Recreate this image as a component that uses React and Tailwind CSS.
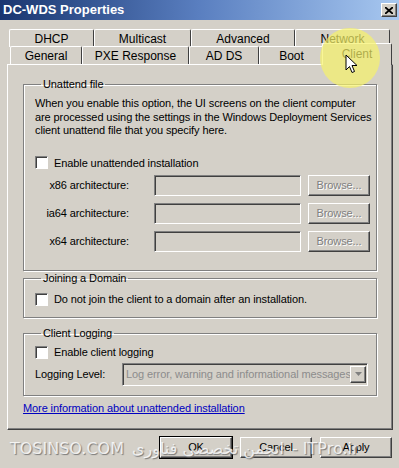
import React from "react";

const raised =
  "border border-t-white border-l-white border-r-[#404040] border-b-[#404040] shadow-[inset_-1px_-1px_0_#808080]";
const sunken =
  "border border-t-[#808080] border-l-[#808080] border-r-white border-b-white shadow-[inset_1px_1px_0_#404040]";
const etched = "border border-[#808080] shadow-[inset_1px_1px_0_#fff,1px_1px_0_#fff]";
const txt = "text-[11px] tracking-[-0.1px] whitespace-nowrap";

const BACK_TABS = [
  ["DHCP", 85],
  ["Multicast", 97],
  ["Advanced", 104],
  ["Network", 95],
];
const FRONT_TABS = [
  ["General", 72],
  ["PXE Response", 107],
  ["AD DS", 70],
  ["Boot", 65],
];

function Tab({ label, w, className = "" }) {
  return (
    <div
      style={{ width: w }}
      className={`flex h-[18px] shrink-0 items-center justify-center rounded-t-[2px] border-t border-l border-r border-t-white border-l-white border-r-[#404040] text-[12px] text-black ${className}`}
    >
      {label}
    </div>
  );
}

function Group({ title, className = "", children }) {
  return (
    <fieldset className={`${etched} mx-[15px] min-w-0 pl-[11px] pr-[7px] ${className}`}>
      <legend className={`ml-[6px] px-[2px] leading-[14px] text-black ${txt}`}>{title}</legend>
      {children}
    </fieldset>
  );
}

function Check({ label }) {
  return (
    <div className="flex items-center gap-[6px]">
      <div className={`${sunken} h-[13px] w-[13px] bg-white`} />
      <span className={`${txt} text-black`}>{label}</span>
    </div>
  );
}

function Browse() {
  return (
    <div
      className={`${raised} flex h-[21px] w-[62px] items-center justify-center text-[#808080] [text-shadow:1px_1px_0_#fff] ${txt}`}
    >
      Browse...
    </div>
  );
}

function ArchRow({ label }) {
  return (
    <div className="flex h-[21px] items-center">
      <span className={`w-[98px] shrink-0 pr-[4px] text-right text-black ${txt}`}>{label}</span>
      <div className={`${sunken} ml-[21px] h-[21px] w-[147px] shrink-0`} />
      <div className="ml-[7px] shrink-0">
        <Browse />
      </div>
    </div>
  );
}

function Button({ label, def }) {
  return (
    <div className={def ? "border border-black" : "border border-transparent"}>
      <div className={`${raised} flex h-[21px] w-[72px] items-center justify-center text-black ${txt}`}>
        {label}
      </div>
    </div>
  );
}

export default function App() {
  return (
    <div className="relative h-[468px] w-[399px] overflow-hidden bg-[#d4d0c8] font-['Liberation_Sans',Arial,sans-serif]">
      {/* title bar */}
      <div className="flex h-[20px] items-center justify-between bg-gradient-to-r from-[#1a3670] via-[#5a7fc0] to-[#a8c8f0] pl-[3px] pr-[2px]">
        <span className="text-[13px] font-bold text-white">DC-WDS Properties</span>
        <div className={`${raised} flex h-[14px] w-[16px] items-center justify-center bg-[#d4d0c8]`}>
          <svg width="8" height="7" viewBox="0 0 8 7">
            <path d="M0 0 L8 7 M8 0 L0 7" stroke="#000" strokeWidth="1.8" />
          </svg>
        </div>
      </div>

      {/* tabs */}
      <div className="mt-[9px] flex pl-[9px]">
        {BACK_TABS.map(([l, w]) => (
          <Tab key={l} label={l} w={w} />
        ))}
      </div>
      <div className="flex h-[17px] items-end pl-[10px]">
        {FRONT_TABS.map(([l, w]) => (
          <Tab key={l} label={l} w={w} />
        ))}
        <Tab label="Client" w={70} className="relative -mb-[1px] -ml-[2px] h-[22px] bg-[#d4d0c8] pb-[2px] text-[#555]" />
      </div>

      {/* panel */}
      <div className="ml-[7px] flex h-[366px] w-[386px] flex-col border border-t-white border-l-white border-r-[#404040] border-b-[#404040] shadow-[inset_-1px_-1px_0_#808080]">
        <Group title="Unattend file" className="mt-[12px] h-[194px]">
          <p className={`mt-[6px] leading-[13.5px] text-black ${txt}`}>
            When you enable this option, the UI screens on the client computer
            <br />
            are processed using the settings in the Windows Deployment Services
            <br />
            client unattend file that you specify here.
          </p>
          <div className="mt-[17px]">
            <Check label="Enable unattended installation" />
          </div>
          <div className="mt-[4px] flex flex-col gap-[7px]">
            <ArchRow label="x86 architecture:" />
            <ArchRow label="ia64 architecture:" />
            <ArchRow label="x64 architecture:" />
          </div>
        </Group>

        <Group title="Joining a Domain" className="h-[47px]">
          <div className="mt-[6px]">
            <Check label="Do not join the client to a domain after an installation." />
          </div>
        </Group>

        <Group title="Client Logging" className="mt-[8px] h-[70px]">
          <div className="mt-[4px]">
            <Check label="Enable client logging" />
          </div>
          <div className="mt-[2px] flex items-center">
            <span className={`w-[87px] shrink-0 text-black ${txt}`}>Logging Level:</span>
            <div className={`${sunken} flex h-[23px] w-[246px] shrink-0 items-center justify-between pl-[3px] pr-[1px]`}>
              <span className={`overflow-hidden text-[#8c8c8c] ${txt}`}>
                Log error, warning and informational messages
              </span>
              <div className={`${raised} flex h-[17px] w-[16px] shrink-0 items-center justify-center`}>
                <svg width="7" height="4" viewBox="0 0 7 4">
                  <path d="M0 0 H7 L3.5 4 Z" fill="#808080" />
                </svg>
              </div>
            </div>
          </div>
        </Group>

        <a href="#" className={`ml-[15px] mt-[4px] self-start text-[#0000c0] underline ${txt}`}>
          More information about unattended installation
        </a>
      </div>

      {/* footer buttons */}
      <div className="mt-[6px] flex justify-end gap-[6px] pr-[6px]">
        <Button label="OK" def />
        <Button label="Cancel" />
        <Button label="Apply" />
      </div>

      {/* cursor highlight */}
      <div className="pointer-events-none absolute left-[320px] top-[28px] h-[60px] w-[60px] rounded-full bg-[#f6f26a]/70" />
      <svg className="pointer-events-none absolute left-[345px] top-[54px]" width="13" height="20" viewBox="0 0 13 20">
        <path d="M1 1 L1 16 L4.5 12.5 L7 18.5 L9.5 17.5 L7 11.5 L12 11.5 Z" fill="#fff" stroke="#000" strokeWidth="1" />
      </svg>

      {/* watermark */}
      <div className="pointer-events-none absolute left-[10px] top-[437px] flex items-center gap-[8px] font-['DejaVu_Sans',sans-serif] text-[16px] text-white/80 [text-shadow:1px_1px_1px_#777]">
        <span>TOSINSO.COM</span>
        <span dir="rtl">انجمن تخصصی فناوری</span>
        <span>- ITPro.ir</span>
      </div>
    </div>
  );
}
